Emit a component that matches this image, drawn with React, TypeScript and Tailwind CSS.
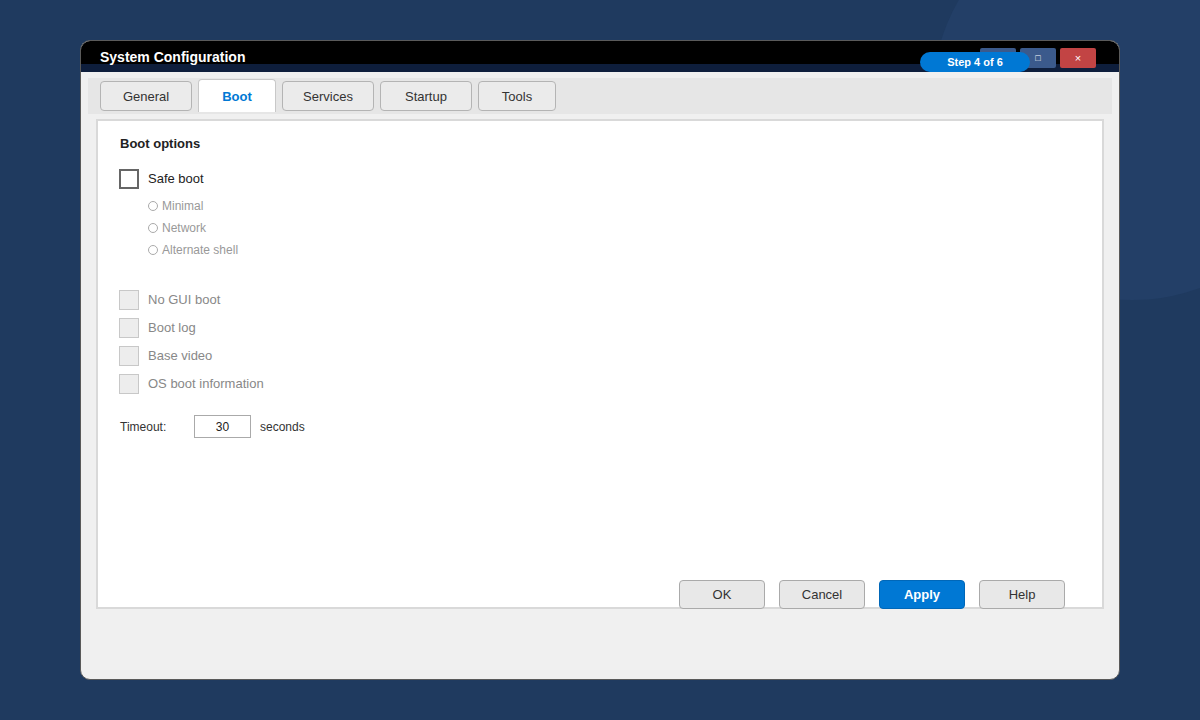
import React from 'react';

const tabs = [
  { label: 'General', width: 'w-[92px]' },
  { label: 'Boot', width: 'w-[78px]', active: true },
  { label: 'Services', width: 'w-[92px]' },
  { label: 'Startup', width: 'w-[92px]' },
  { label: 'Tools', width: 'w-[78px]' },
];

const safeModes = ['Minimal', 'Network', 'Alternate shell'];
const bootFlags = ['No GUI boot', 'Boot log', 'Base video', 'OS boot information'];

const buttons = [
  { label: 'OK' },
  { label: 'Cancel' },
  { label: 'Apply', primary: true },
  { label: 'Help' },
];

export default function App() {
  return (
    <div className="relative w-[1200px] h-[720px] overflow-hidden bg-[#1f3a5f] pt-[40px] pl-[80px] font-['Liberation_Sans',Arial,sans-serif]">
      {/* background decoration */}
      <div className="absolute left-[932px] top-[-100px] w-[400px] h-[400px] rounded-full bg-[#233f67]" />

      <div className="relative w-[1040px] h-[640px] flex flex-col rounded-[10px] border border-[#5a5a5a] bg-[#f0f0f0] overflow-hidden">
        {/* title bar */}
        <div className="h-[31px] flex justify-between bg-[linear-gradient(to_bottom,#000_23px,#0e1e3c_23px)]">
          <div className="pl-[19px] pt-[8px] text-[14px] leading-[16px] font-bold text-white">
            System Configuration
          </div>
          <div className="flex gap-[4px] pt-[7px] pr-[23px]">
            <div className="w-[36px] h-[20px] rounded-[2px] bg-[#3b5a8c]" />
            <div className="w-[36px] h-[20px] rounded-[2px] bg-[#3b5a8c] flex items-center justify-center text-white text-[9px] leading-none">
              □
            </div>
            <div className="w-[36px] h-[20px] rounded-[2px] bg-[#c24444] flex items-center justify-center text-white text-[11px] leading-none">
              ×
            </div>
          </div>
        </div>

        {/* step badge */}
        <div className="absolute left-[839px] top-[11px] w-[110px] h-[20px] rounded-full bg-[#0078d4] flex items-center justify-center text-white text-[11px] font-bold">
          Step 4 of 6
        </div>

        <div className="flex-1 flex flex-col px-[7px] pt-[6px]">
          {/* tabs */}
          <div className="h-[36px] bg-[#e6e6e6] flex items-start gap-[6px] pl-[12px] pt-[1px]">
            {tabs.map(t =>
              t.active ? (
                <div
                  key={t.label}
                  className={`${t.width} h-[33px] rounded-t-[4px] border border-b-0 border-[#c8c8c8] bg-white flex items-center justify-center pt-[1px] text-[13px] font-bold text-[#0078d4]`}
                >
                  {t.label}
                </div>
              ) : (
                <div
                  key={t.label}
                  className={`${t.width} h-[30px] mt-[2px] rounded-[4px] border border-[#b4b4b4] bg-[#ebebeb] flex items-center justify-center pt-[1px] text-[13px] text-[#333]`}
                >
                  {t.label}
                </div>
              )
            )}
          </div>

          {/* panel */}
          <div className="mx-[8px] mt-[5px] h-[490px] flex flex-col border-2 border-[#d9d9d9] bg-white pl-[22px]">
            <div className="mt-[14px] text-[13px] leading-[18px] font-bold text-[#222]">Boot options</div>

            <div className="mt-[16px] flex items-center gap-[9px] h-[20px]">
              <div className="w-[20px] h-[20px] -ml-[1px] border-2 border-[#666] bg-white" />
              <span className="text-[13px] text-[#222]">Safe boot</span>
            </div>

            <div className="mt-[6px] pl-[28px] flex flex-col">
              {safeModes.map(m => (
                <div key={m} className="h-[22px] flex items-center gap-[4px]">
                  <div className="w-[10px] h-[10px] rounded-full border border-[#aaa] bg-white" />
                  <span className="text-[12px] text-[#999]">{m}</span>
                </div>
              ))}
            </div>

            <div className="mt-[29px] flex flex-col gap-[8px]">
              {bootFlags.map(f => (
                <div key={f} className="h-[20px] flex items-center gap-[9px]">
                  <div className="w-[20px] h-[20px] -ml-[1px] border border-[#c8c8c8] bg-[#ededed]" />
                  <span className="text-[13px] text-[#888]">{f}</span>
                </div>
              ))}
            </div>

            <div className="mt-[21px] flex items-center h-[23px] text-[12px] text-[#333]">
              <span className="w-[74px]">Timeout:</span>
              <div className="w-[57px] h-[23px] border border-[#aaa] bg-white flex items-center justify-center text-[12px] text-[#222]">
                30
              </div>
              <span className="ml-[9px]">seconds</span>
            </div>

            <div className="mt-auto mb-[-2px] flex justify-end gap-[14px] pr-[37px]">
              {buttons.map(b => (
                <div
                  key={b.label}
                  className={
                    b.primary
                      ? 'w-[86px] h-[29px] rounded-[4px] border border-[#0067b8] bg-[#0078d4] flex items-center justify-center text-[13px] font-bold text-white'
                      : 'w-[86px] h-[29px] rounded-[4px] border border-[#aaa] bg-[#e8e8e8] flex items-center justify-center text-[13px] text-[#333]'
                  }
                >
                  {b.label}
                </div>
              ))}
            </div>
          </div>
        </div>
      </div>
    </div>
  );
}
